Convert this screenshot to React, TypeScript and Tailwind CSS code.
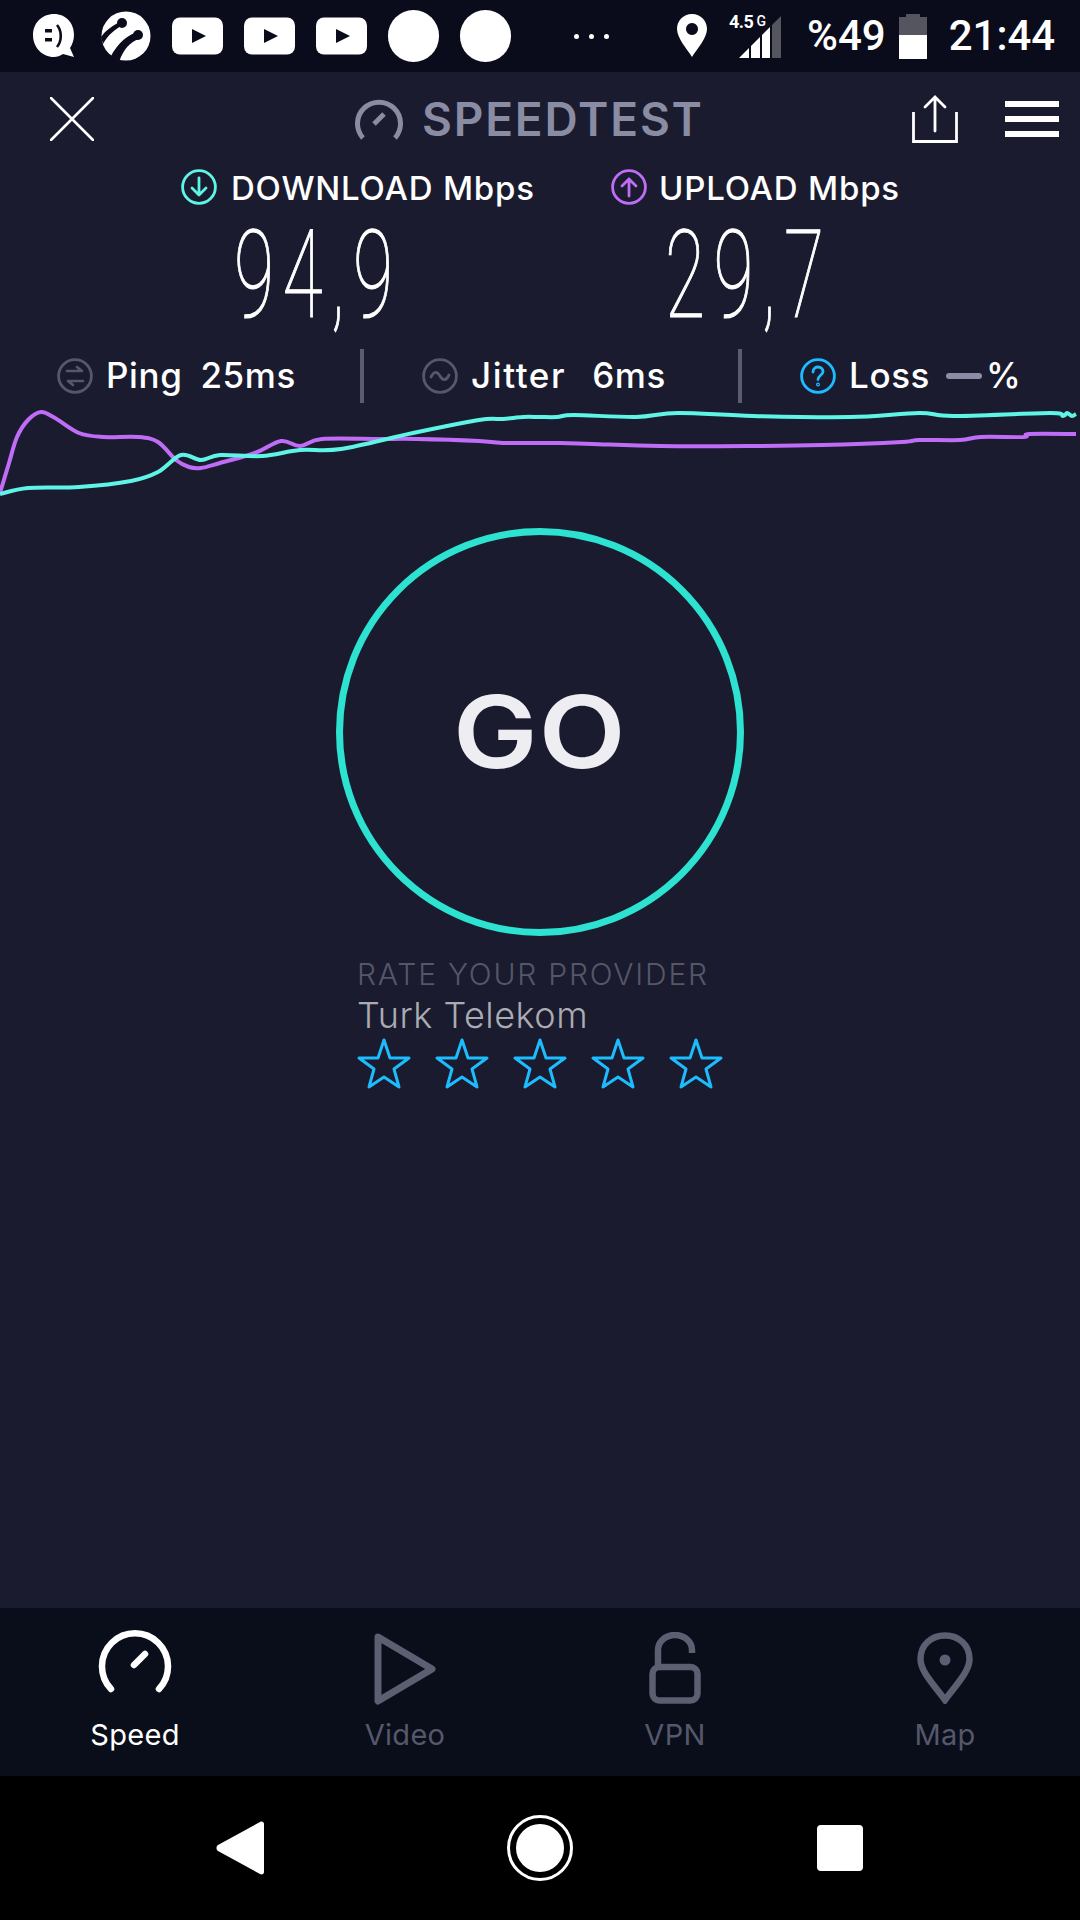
import { ReactNode } from 'react';

const sans = "font-['Inter','Liberation_Sans',sans-serif]";

// chart lines, read off the reference
const PURPLE = [
  [0, 493], [9, 463], [17, 437], [28, 420], [41, 412], [55, 418], [79, 433], [103, 437], [138, 437], [158, 442], [176, 460], [189, 467], [201, 468], [220, 463], [255, 453], [281, 441], [300, 446], [322, 439], [379, 439], [417, 439], [479, 441], [503, 443], [560, 443], [592, 444], [660, 446], [747, 446], [822, 445], [902, 442], [919, 440], [960, 440], [981, 437], [1024, 437], [1029, 434], [1076, 434],
];

const CYAN = [
  [0, 494], [28, 488], [79, 487], [131, 481], [158, 472], [181, 455], [201, 460], [220, 455], [262, 456], [300, 450], [341, 449], [413, 433], [479, 420], [503, 419], [523, 417], [540, 417], [557, 417], [574, 415], [636, 417], [678, 413], [753, 416], [850, 417], [919, 413], [953, 416], [1050, 413], [1063, 416], [1067, 413], [1072, 416], [1076, 414],
];

// smooth line through the points (catmull-rom to bezier)
const toPath = (pts: number[][]) => {
  let d = `M${pts[0][0]},${pts[0][1]}`;
  for (let i = 0; i < pts.length - 1; i++) {
    const p0 = pts[Math.max(i - 1, 0)];
    const p1 = pts[i];
    const p2 = pts[i + 1];
    const p3 = pts[Math.min(i + 2, pts.length - 1)];
    const c1x = p1[0] + (p2[0] - p0[0]) / 6;
    const c1y = p1[1] + (p2[1] - p0[1]) / 6;
    const c2x = p2[0] - (p3[0] - p1[0]) / 6;
    const c2y = p2[1] - (p3[1] - p1[1]) / 6;
    d += ` C${c1x},${c1y} ${c2x},${c2y} ${p2[0]},${p2[1]}`;
  }
  return d;
};

const Yt = () => (
  <svg width="51" height="38" viewBox="0 0 51 38">
    <rect width="51" height="37" y="0.5" rx="8" fill="#fff" />
    <path d="M20,12 L34,19 L20,26 Z" fill="#0a0c1b" />
  </svg>
);

const RoundIcon = ({ color, children }: { color: string; children: ReactNode }) => (
  <svg width="36" height="36" viewBox="0 0 36 36" fill="none" stroke={color} strokeWidth="2.8" strokeLinecap="round" strokeLinejoin="round" className="shrink-0">
    <circle cx="18" cy="18" r="16.4" />
    {children}
  </svg>
);

const Star = () => (
  <svg width="56" height="52" viewBox="0 0 56 52" fill="none" stroke="#1cbcff" strokeWidth="3" strokeLinejoin="round">
    <path d="M28,2 L34,20 L53,20 L38,31 L43,49 L28,39 L13,49 L18,31 L3,20 L22,20 Z" />
  </svg>
);

const Tab = ({ label, active, iconClass, children }: { label: string; active?: boolean; iconClass: string; children: ReactNode }) => (
  <div className="flex-1 flex flex-col items-center">
    <div className="h-[93px] flex flex-col items-center">
      <div className={iconClass}>{children}</div>
    </div>
    <span className={`${sans} text-[29px] leading-[34px] font-normal tracking-[0.3px] ${active ? 'text-white' : 'text-[#55586b]'}`}>{label}</span>
  </div>
);

const App = () => {
  return (
    <div className={`${sans} w-[1080px] h-[1920px] flex flex-col bg-[#1a1b2e] text-white overflow-hidden`}>
      {/* status bar */}
      <div className="h-[72px] shrink-0 bg-[#0a0c1b] flex items-center pl-[33px]">
        <svg width="42" height="44" viewBox="0 0 42 44" className="shrink-0">
          <path d="M21,0 C33,0 41,9 41,21 C41,26 39,31 37,34 L41,43 L30,40 C27,42 24,43 21,43 C9,43 0,33 0,21 C0,9 9,0 21,0 Z" fill="#fff" />
          <rect x="12" y="15" width="7" height="3.5" fill="#0a0c1b" />
          <rect x="12" y="24" width="7" height="3.5" fill="#0a0c1b" />
          <path d="M24,11 C29,17 29,27 24,33" fill="none" stroke="#0a0c1b" strokeWidth="2.6" />
        </svg>
        <svg width="50" height="50" viewBox="0 0 50 50" className="shrink-0 ml-[26px]">
          <circle cx="25" cy="25" r="24.5" fill="#fff" />
          <path d="M0,26 C5,19 12,14 21,10 L22,14 C14,18 7,24 2,33 Z" fill="#0a0c1b" />
          <path d="M37,21 C28,23 17,31 9,47 L18,51 C22,39 29,31 38,28 Z" fill="#0a0c1b" />
          <circle cx="21" cy="12" r="5" fill="#0a0c1b" />
          <circle cx="37" cy="24" r="5" fill="#0a0c1b" />
        </svg>
        <div className="ml-[21px] flex gap-[21px]">
          <Yt />
          <Yt />
          <Yt />
        </div>
        <div className="ml-[21px] flex gap-[21px]">
          <div className="w-[51px] h-[52px] rounded-full bg-white" />
          <div className="w-[51px] h-[52px] rounded-full bg-white" />
        </div>
        <div className="ml-[63px] flex gap-[10px]">
          <div className="w-[5px] h-[5px] rounded-full bg-white" />
          <div className="w-[5px] h-[5px] rounded-full bg-white" />
          <div className="w-[5px] h-[5px] rounded-full bg-white" />
        </div>
        <svg width="30" height="44" viewBox="0 0 30 44" className="ml-[68px] shrink-0">
          <path fillRule="evenodd" d="M15,0 C24,0 30,7 30,15 C30,24 20,35 15,43 C10,35 0,24 0,15 C0,7 6,0 15,0 Z M15,9 A6,6 0 1 0 15.01,9 Z" fill="#fff" />
        </svg>
        <div className="relative w-[53px] h-[46px] ml-[22px] shrink-0">
          <span className="absolute left-0 top-[-2px] text-[18px] leading-[20px] font-['Roboto',sans-serif] font-bold tracking-[-0.5px]">4.5<span className="text-[14px] font-medium ml-[3px] align-[2px]">G</span></span>
          <svg width="43" height="44" viewBox="0 0 43 44" className="absolute left-[10px] top-[2px]">
            <path d="M0,43 L10,33 L10,43 Z" fill="#fff" />
            <path d="M12,31 L21,22 L21,43 L12,43 Z" fill="#fff" />
            <path d="M23,20 L31,12 L31,43 L23,43 Z" fill="#fff" />
            <path d="M33,10 L42,1 L42,43 L33,43 Z" fill="#55555f" />
          </svg>
        </div>
        <span className="ml-[25px] font-['Roboto',sans-serif] text-[42px] leading-none font-medium">%49</span>
        <div className="ml-[13px] w-[28px] h-[45px] flex flex-col items-center shrink-0">
          <div className="w-[14px] h-[3px] bg-[#55555f]" />
          <div className="w-full h-[18px] bg-[#55555f]" />
          <div className="w-full flex-1 bg-white" />
        </div>
        <span className="ml-[22px] font-['Roboto',sans-serif] text-[42px] leading-none font-medium">21:44</span>
      </div>

      {/* cabecalho */}
      <div className="h-[82px] shrink-0 flex items-center pl-[50px] pt-[12px]">
        <svg width="44" height="44" viewBox="0 0 44 44" stroke="#fff" strokeWidth="2.6" strokeLinecap="round" className="shrink-0">
          <path d="M1,1 L43,43 M43,1 L1,43" />
        </svg>
        <svg width="48" height="42" viewBox="0 0 48 42" fill="none" stroke="#8a8ca3" strokeWidth="5" strokeLinecap="butt" className="ml-[261px] shrink-0">
          <path d="M8,40 A21.5,21.5 0 1 1 40,40" />
          <path d="M19,26 L29,16" strokeWidth="5" />
        </svg>
        <span className="ml-[19px] w-[284px] text-[46px] leading-none font-semibold text-[#8a8ca3] tracking-[1.8px] whitespace-nowrap">SPEEDTEST</span>
        <svg width="46" height="48" viewBox="0 0 46 48" fill="none" stroke="#fff" strokeWidth="2.8" className="ml-[206px] shrink-0">
          <path d="M1.5,17 L1.5,46.5 L44.5,46.5 L44.5,17" />
          <path d="M23,3 L23,36 M13,12 L23,2 L33,12" strokeLinecap="round" />
        </svg>
        <div className="ml-[47px] w-[54px] flex flex-col gap-[9px]">
          <div className="h-[6px] bg-white" />
          <div className="h-[6px] bg-white" />
          <div className="h-[6px] bg-white" />
        </div>
      </div>

      {/* download / upload */}
      <div className="flex h-[41px] mt-[12px] items-center shrink-0 text-[33px] leading-[41px] font-medium tracking-[0.8px]">
        <div className="ml-[181px] flex items-center gap-[14px] w-[430px]">
          <RoundIcon color="#5ff5e6">
            <path d="M18,9 L18,26 M11,19 L18,26 L25,19" />
          </RoundIcon>
          <span className="whitespace-nowrap mt-[4px]">DOWNLOAD Mbps</span>
        </div>
        <div className="flex items-center gap-[12px]">
          <RoundIcon color="#bf6cf6">
            <path d="M18,27 L18,10 M11,17 L18,10 L25,17" />
          </RoundIcon>
          <span className="whitespace-nowrap mt-[4px]">UPLOAD Mbps</span>
        </div>
      </div>

      {/* velocidades */}
      <div className="flex h-[113px] mt-[10px] items-center shrink-0 font-['Roboto',sans-serif] font-thin text-[122px] leading-[113px] [-webkit-text-stroke:1.2px_white]">
        <div className="ml-[234px] w-[431px]">
          <span className="inline-block origin-left scale-x-[0.6] tracking-[14px] mt-[3px]">94,9</span>
        </div>
        <span className="inline-block origin-left scale-x-[0.6] tracking-[14px] mt-[3px]">29,7</span>
      </div>

      {/* ping / jitter / loss */}
      <div className="flex h-[54px] items-center mt-[19px] shrink-0 text-[35px] leading-[44px] font-medium tracking-[0.6px]">
        <div className="ml-[57px] flex items-center w-[303px]">
          <RoundIcon color="#565869">
            <path d="M10,13 L25,13 L20,9 M26,23 L11,23 L16,27" strokeWidth="2.6" />
          </RoundIcon>
          <span className="ml-[13px] mt-[-2px]">Ping</span>
          <span className="ml-[18px] mt-[-2px]">25ms</span>
        </div>
        <div className="w-[4px] h-[54px] bg-[#5a5c70]" />
        <div className="ml-[58px] flex items-center w-[316px]">
          <RoundIcon color="#565869">
            <path d="M9,19 C12,13 15,13 18,18 C21,23 24,23 27,17" />
          </RoundIcon>
          <span className="ml-[13px] mt-[-2px] tracking-[1.6px]">Jitter</span>
          <span className="ml-[26px] mt-[-2px]">6ms</span>
        </div>
        <div className="w-[4px] h-[54px] bg-[#5a5c70]" />
        <div className="ml-[58px] flex items-center">
          <RoundIcon color="#1cbcff">
            <path d="M13,14 C13,10 16,9 18,9 C21,9 23,11 23,13.5 C23,17 18,17.5 18,21.5" />
            <circle cx="18" cy="26.5" r="0.6" />
          </RoundIcon>
          <span className="ml-[13px] mt-[-2px]">Loss</span>
          <div className="ml-[16px] w-[36px] h-[6px] rounded-full bg-[#8a8ca3]" />
          <span className="ml-[4px] mt-[-2px]">%</span>
        </div>
      </div>

      {/* grafico */}
      <svg width="1080" height="100" viewBox="0 400 1080 100" fill="none" strokeWidth="4" strokeLinejoin="round" className="shrink-0 mt-[-3px]">
        <path d={toPath(PURPLE)} stroke="#bf6cf6" />
        <path d={toPath(CYAN)} stroke="#5ff5e6" />
      </svg>

      {/* botao GO */}
      <div className="mt-[28px] flex justify-center shrink-0">
        <div className="w-[408px] h-[408px] rounded-full border-[7px] border-[#2de2d0] flex items-center justify-center">
          <span className="inline-block scale-x-[1.13] text-[100px] leading-none font-semibold text-[#eeeef2] tracking-[1px]">GO</span>
        </div>
      </div>

      {/* avaliacao */}
      <div className="ml-[357px] mt-[19px] flex flex-col shrink-0">
        <span className="text-[30px] leading-[38px] font-light text-[#555768] tracking-[1.8px] whitespace-nowrap">RATE YOUR PROVIDER</span>
        <span className="text-[36px] leading-[44px] font-light text-[#aaabb3] tracking-[0.5px]">Turk Telekom</span>
        <div className="flex gap-[22px] ml-[-1px] mt-[1px]">
          <Star />
          <Star />
          <Star />
          <Star />
          <Star />
        </div>
      </div>

      <div className="flex-1" />

      {/* abas */}
      <div className="h-[168px] shrink-0 bg-[#0a0d1a] flex pt-[17px]">
        <Tab label="Speed" active iconClass="mt-[2px]">
          <svg width="74" height="66" viewBox="0 0 74 66" fill="none" stroke="#fff" strokeWidth="6.5" strokeLinecap="round">
            <path d="M13,62 A33,33 0 1 1 61,62" />
            <path d="M36,38 L47,27" />
          </svg>
        </Tab>
        <Tab label="Video" iconClass="mt-[8px]">
          <svg width="62" height="72" viewBox="0 0 62 72" fill="none" stroke="#5c5e72" strokeWidth="7" strokeLinejoin="round">
            <path d="M4,4 L58,36 L4,68 Z" />
          </svg>
        </Tab>
        <Tab label="VPN" iconClass="mt-[7px]">
          <svg width="52" height="72" viewBox="0 0 52 72" fill="none" stroke="#5c5e72" strokeWidth="6.5">
            <rect x="3.5" y="35" width="45" height="33.5" rx="7" />
            <path d="M9,35 L9,18 A17,15 0 0 1 43,18 L43,21" />
          </svg>
        </Tab>
        <Tab label="Map" iconClass="mt-[7px]">
          <svg width="56" height="72" viewBox="0 0 56 72" fill="none" stroke="#5c5e72" strokeWidth="6.5">
            <path d="M28,68 C18,54 3.5,40 3.5,27 C3.5,13 14,3.5 28,3.5 C42,3.5 52.5,13 52.5,27 C52.5,40 38,54 28,68 Z" />
            <circle cx="28" cy="28" r="5.5" fill="#5c5e72" stroke="none" />
          </svg>
        </Tab>
      </div>

      {/* navegacao */}
      <div className="h-[144px] shrink-0 bg-black flex items-center">
        <svg width="48" height="56" viewBox="0 0 48 56" className="ml-[216px] shrink-0">
          <path d="M44,2 C46,1 48,2 48,4 L48,52 C48,54 46,55 44,54 L2,31 C0,30 0,26 2,25 Z" fill="#fff" />
        </svg>
        <div className="ml-[243px] w-[66px] h-[66px] rounded-full border-[3px] border-white flex items-center justify-center shrink-0">
          <div className="w-[48px] h-[48px] rounded-full bg-white" />
        </div>
        <div className="ml-[244px] w-[46px] h-[46px] rounded-[4px] bg-white shrink-0" />
      </div>
    </div>
  );
};

export default App;
